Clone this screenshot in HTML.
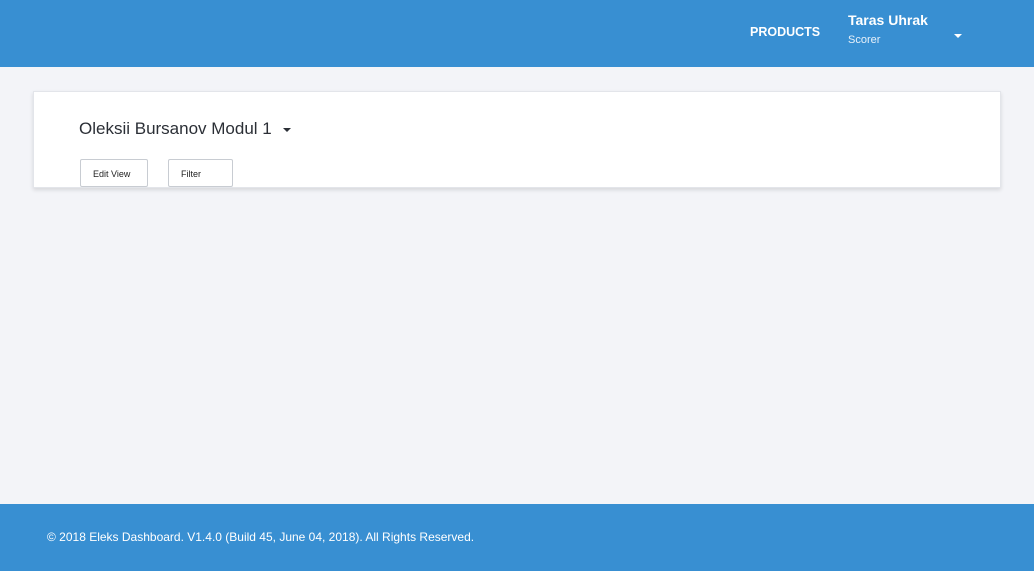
<!DOCTYPE html>
<html><head><meta charset="utf-8"><style>
*{box-sizing:border-box;margin:0;padding:0}
body{width:1034px;height:571px;background:#f3f4f8;font-family:"Liberation Sans",sans-serif;position:relative;overflow:hidden}
.hdr{position:absolute;left:0;top:0;width:1034px;height:67px;background:#388fd2;color:#fff}
.prod{position:absolute;left:750px;top:25px;font-size:12.5px;font-weight:bold}
.name{position:absolute;left:848px;top:12px;font-size:14px;font-weight:bold}
.role{position:absolute;left:848px;top:34px;font-size:11px;color:#e8f1fa}
.car{position:absolute;left:954px;top:34px;width:0;height:0;border-left:4px solid transparent;border-right:4px solid transparent;border-top:4px solid #fff}
.card{position:absolute;left:33px;top:91px;width:968px;height:97px;background:#fff;border:1px solid #e3e5ea;box-shadow:0 2px 4px rgba(0,0,0,.12)}
.title{position:absolute;left:45px;top:27px;font-size:17px;color:#2b2f36}
.tc{position:absolute;left:249px;top:36px;border-left:4px solid transparent;border-right:4px solid transparent;border-top:4px solid #2b2f36}
.btn{position:absolute;top:67px;height:28px;border:1px solid #c8ccd2;border-radius:2px;font-size:9px;color:#222;line-height:29px;padding-left:12px;background:#fff}
.ftr{position:absolute;left:0;top:504px;width:1034px;height:67px;background:#388fd2;color:#fff;font-size:12px}
.ftr span{position:absolute;left:47px;top:26px}
</style></head><body>
<div class="hdr"><div class="prod">PRODUCTS</div><div class="name">Taras Uhrak</div><div class="role">Scorer</div><div class="car"></div></div>
<div class="card"><div class="title">Oleksii Bursanov Modul 1</div><div class="tc"></div>
<div class="btn" style="left:46px;width:68px">Edit View</div>
<div class="btn" style="left:134px;width:65px">Filter</div></div>
<div class="ftr"><span>© 2018 Eleks Dashboard. V1.4.0 (Build 45, June 04, 2018). All Rights Reserved.</span></div>
</body></html>
